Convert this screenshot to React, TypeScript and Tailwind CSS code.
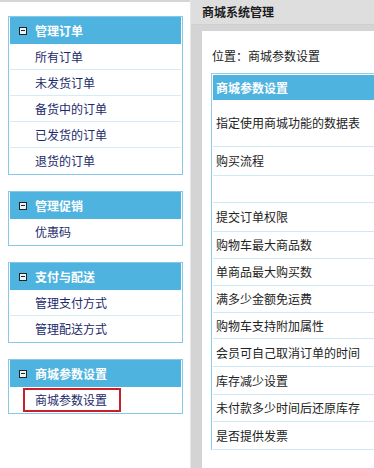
const font = { fontFamily: '"Noto Sans CJK SC", "Liberation Sans", sans-serif' };

type Menu = { title: string; items: string[] };

const menus: Menu[] = [
  { title: "管理订单", items: ["所有订单", "未发货订单", "备货中的订单", "已发货的订单", "退货的订单"] },
  { title: "管理促销", items: ["优惠码"] },
  { title: "支付与配送", items: ["管理支付方式", "管理配送方式"] },
  { title: "商城参数设置", items: ["商城参数设置"] },
];

// label, row height
const rows: [string, number][] = [
  ["指定使用商城功能的数据表", 47],
  ["购买流程", 29],
  ["", 27],
  ["提交订单权限", 29],
  ["购物车最大商品数", 27],
  ["单商品最大购买数", 27],
  ["满多少金额免运费", 27],
  ["购物车支持附加属性", 26],
  ["会员可自己取消订单的时间", 28],
  ["库存减少设置", 28],
  ["未付款多少时间后还原库存", 27],
  ["是否提供发票", 28],
];

function MinusBox() {
  return (
    <span className="w-[8px] h-[8px] border border-[#222] bg-[#e8f4fa] flex items-center justify-center shrink-0">
      <span className="w-[4px] h-[1px] bg-[#222]" />
    </span>
  );
}

const App = () => {
  return (
    <div className="w-[374px] h-[468px] flex overflow-hidden bg-white text-[12px]" style={font}>
      {/* Left menu */}
      <aside className="w-[190px] shrink-0 border-t-2 border-[#d6d6d6] flex flex-col gap-[16px] pt-[14px] pl-[8px] pr-[7px]">
        {menus.map((m, mi) => (
          <div key={m.title} className="border border-[#86c8e8] px-[1px] bg-white">
            <div className="h-[27px] bg-[#4eb3df] flex items-center gap-[8px] pl-[9px] text-white font-bold">
              <MinusBox />
              <span>{m.title}</span>
            </div>
            {m.items.map((it, i) => (
              <div
                key={it}
                className={`h-[26px] flex items-center text-[#1b2a6b] ${
                  i < m.items.length - 1 ? "border-b border-[#d4ecf7]" : ""
                } ${mi === 3 ? "pl-[13px]" : "pl-[25px]"}`}
              >
                {mi === 3 ? (
                  <span className="h-[24px] w-[98px] border-2 border-[#c8202a] flex items-center pl-[10px]">{it}</span>
                ) : (
                  it
                )}
              </div>
            ))}
          </div>
        ))}
      </aside>

      {/* Right main */}
      <main className="flex-1 bg-[#d4d4d4] flex flex-col border-l border-[#e6e6e6]">
        <div className="h-[25px] shrink-0 bg-[#dedede] border-b border-[#cfcfcf] flex items-center pl-[11px] font-bold text-[#1a1a1a]">
          商城系统管理
        </div>
        <div className="flex-1 mt-[6px] ml-[11px] bg-white pt-[15px] pl-[9px] text-[#222]">
          <div className="h-[20px] flex items-center pl-[1px]">位置：商城参数设置</div>
          <div className="mt-[7px] border-l border-t border-[#8fcdea] pl-[1px] pt-[1px] w-[200px]">
            <div className="h-[25px] bg-[#4eb3df] text-white font-bold flex items-center pl-[3px]">商城参数设置</div>
            {rows.map(([label, h], i) => (
              <div
                key={i}
                className="border-b border-[#cfe8f5] flex items-center pl-[3px]"
                style={{ height: h }}
              >
                {label}
              </div>
            ))}
          </div>
        </div>
      </main>
    </div>
  );
};

export default App;
